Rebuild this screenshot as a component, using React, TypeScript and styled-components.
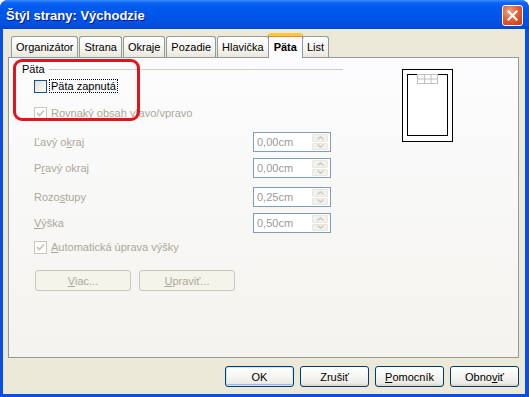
import React from 'react';
import styled, {createGlobalStyle, css} from 'styled-components';

const GlobalStyle = createGlobalStyle`
  html, body {
    margin: 0;
    padding: 0;
    background: #ffffff;
  }
  body {
    font-family: 'Liberation Sans', Arial, sans-serif;
    font-size: 11px;
  }
`;

const colors = {
  face: '#ECE9D8',
  tabBorder: '#919B9C',
  disabled: '#ACA899',
  disabledBorder: '#C9C7BA',
  fieldBorder: '#7F9DB9',
  buttonBorder: '#003C74',
  frame: '#0A4FE2',
};

const Window = styled.div`
  width: 529px;
  height: 397px;
  display: flex;
  flex-direction: column;
  background: ${colors.frame};
  border-radius: 8px 8px 0 0;
  overflow: hidden;
`;

const TitleBar = styled.div`
  height: 29px;
  flex: none;
  display: flex;
  align-items: center;
  justify-content: space-between;
  padding: 0 6px 0 6px;
  background: linear-gradient(
    to bottom,
    #3a8cff 0%,
    #0c63f2 10%,
    #0058ee 30%,
    #0055e8 60%,
    #0050e0 85%,
    #0045d0 100%
  );
`;

const Title = styled.span`
  font-family: 'Liberation Sans', Arial, sans-serif;
  font-weight: bold;
  font-size: 13px;
  color: #ffffff;
  text-shadow: 1px 1px 0 #0a1883;
  padding-top: 1px;
`;

const CloseButton = styled.div`
  width: 19px;
  height: 19px;
  margin-top: 1px;
  border: 1px solid #ffffff;
  border-radius: 3px;
  background: radial-gradient(circle at 35% 30%, #f0a688 0%, #e2603b 45%, #c7390f 100%);
  display: flex;
  align-items: center;
  justify-content: center;
`;

const Client = styled.div`
  flex: 1;
  margin: 0 4px 3px 3px;
  background: ${colors.face};
  padding: 4px 6px 0 5px;
  display: flex;
  flex-direction: column;
`;

const TabStrip = styled.div`
  display: flex;
  align-items: flex-end;
  height: 24px;
  padding-left: 3px;
  gap: 1px;
  position: relative;
  z-index: 1;
`;

const Tab = styled.div<{$active?: boolean}>`
  height: 20px;
  padding: 0 4px;
  display: flex;
  align-items: center;
  border: 1px solid ${colors.tabBorder};
  border-bottom: none;
  border-radius: 3px 3px 0 0;
  background: linear-gradient(to bottom, #ffffff, #f3f2ec 70%, #e8e6dc);
  color: #000000;
  white-space: nowrap;
  ${p =>
    p.$active &&
    css`
      height: 22px;
      margin: 0 -2px -1px -2px;
      padding: 0 5px;
      font-weight: bold;
      border-top: 3px solid #ffc83c;
      border-radius: 3px 3px 0 0;
      background: #fcfcfe;
      box-shadow: inset 0 1px 0 #e68b2c;
    `}
`;

const Panel = styled.div`
  height: 299px;
  border: 1px solid ${colors.tabBorder};
  background: linear-gradient(to bottom, #fcfcfe, #f4f3ee);
  display: flex;
  align-items: flex-start;
  position: relative;
`;

const LeftColumn = styled.div`
  width: 323px;
  padding: 4px 0 0 13px;
  display: flex;
  flex-direction: column;
`;

const GroupHeader = styled.div`
  width: 321px;
  height: 14px;
  display: flex;
  align-items: center;
  gap: 4px;
  color: #000000;
`;

const GroupLine = styled.div`
  flex: 1;
  height: 1px;
  background: #d0d0bf;
`;

const Row = styled.div<{$top: number; $height?: number}>`
  display: flex;
  align-items: center;
  margin-top: ${p => p.$top}px;
  margin-left: 12px;
  height: ${p => p.$height ?? 14}px;
`;

const FieldRow = styled(Row)`
  width: 297px;
  justify-content: space-between;
`;

const Label = styled.span<{$disabled?: boolean; $focused?: boolean}>`
  color: ${p => (p.$disabled ? colors.disabled : '#000000')};
  white-space: nowrap;
  ${p =>
    p.$focused &&
    css`
      outline: 1px dotted #000000;
      outline-offset: 0;
      padding: 0 1px;
      margin-left: -1px;
    `}
`;

const Key = styled.span`
  text-decoration: underline;
`;

const Box = styled.div<{$disabled?: boolean}>`
  width: 11px;
  height: 11px;
  flex: none;
  margin-right: 4px;
  display: flex;
  align-items: center;
  justify-content: center;
  border: 1px solid ${p => (p.$disabled ? colors.disabledBorder : '#1c5180')};
  background: ${p =>
    p.$disabled ? '#ffffff' : 'linear-gradient(135deg, #dcdcd7 0%, #f5f5f2 70%, #ffffff 100%)'};
`;

const SpinField = styled.div`
  width: 73px;
  height: 18px;
  border: 1px solid ${colors.fieldBorder};
  background: #ffffff;
  display: flex;
  align-items: center;
  justify-content: space-between;
  padding-left: 3px;
`;

const FieldValue = styled.span`
  color: #9a9a9a;
`;

const Spinner = styled.div`
  width: 16px;
  height: 16px;
  margin-right: 2px;
  display: flex;
  flex-direction: column;
  gap: 1px;
`;

const SpinHalf = styled.div`
  flex: 1;
  border-radius: 1px;
  background: #f2f1ea;
  border: 1px solid #e9e7df;
  display: flex;
  align-items: center;
  justify-content: center;
`;

const ActionRow = styled(Row)`
  gap: 8px;
  margin-left: 13px;
`;

const DisabledButton = styled.div`
  width: 94px;
  height: 19px;
  border: 1px solid ${colors.disabledBorder};
  border-radius: 3px;
  background: #f5f4ea;
  color: ${colors.disabled};
  display: flex;
  align-items: center;
  justify-content: center;
`;

const Preview = styled.svg`
  margin: 11px 0 0 57px;
  flex: none;
`;

const Annotation = styled.div`
  position: absolute;
  left: 4px;
  top: 1px;
  width: 121px;
  height: 56px;
  border: 3px solid #e0141c;
  border-radius: 9px;
  pointer-events: none;
`;

const ButtonRow = styled.div`
  display: flex;
  justify-content: flex-end;
  gap: 6px;
  margin-top: 8px;
`;

const Button = styled.div<{$default?: boolean}>`
  width: 67px;
  height: 19px;
  border: 1px solid ${colors.buttonBorder};
  border-radius: 3px;
  background: linear-gradient(to bottom, #ffffff 0%, #f7f7f4 40%, #ecebe6 85%, #d6d0c5 100%);
  color: #000000;
  display: flex;
  align-items: center;
  justify-content: center;
  ${p =>
    p.$default &&
    css`
      box-shadow: inset 0 0 0 1px #cee7ff, inset 0 -1px 0 1px #98b8ea;
    `}
`;

function CheckMark({color}: {color: string}) {
  return (
    <svg width="9" height="9" viewBox="0 0 9 9">
      <path d="M1 4 L3.5 6.5 L8 1.5" fill="none" stroke={color} strokeWidth="1.8" />
    </svg>
  );
}

function Arrow({up}: {up?: boolean}) {
  return (
    <svg width="7" height="4" viewBox="0 0 7 4">
      <path d={up ? 'M0.5 3.5 L3.5 0.8 L6.5 3.5' : 'M0.5 0.5 L3.5 3.2 L6.5 0.5'} fill="none" stroke="#c6c6c0" strokeWidth="1.2" />
    </svg>
  );
}

function Field({label, value}: {label: React.ReactNode; value: string}) {
  return (
    <>
      <Label $disabled>{label}</Label>
      <SpinField>
        <FieldValue>{value}</FieldValue>
        <Spinner>
          <SpinHalf>
            <Arrow up />
          </SpinHalf>
          <SpinHalf>
            <Arrow />
          </SpinHalf>
        </Spinner>
      </SpinField>
    </>
  );
}

const tabs = ['Organizátor', 'Strana', 'Okraje', 'Pozadie', 'Hlavička', 'Päta', 'List'];

export default function App() {
  return (
    <>
      <GlobalStyle />
      <Window>
        <TitleBar>
          <Title>Štýl strany: Východzie</Title>
          <CloseButton>
            <svg width="11" height="11" viewBox="0 0 11 11">
              <path d="M1.5 1.5 L9.5 9.5 M9.5 1.5 L1.5 9.5" stroke="#ffffff" strokeWidth="2" strokeLinecap="square" />
            </svg>
          </CloseButton>
        </TitleBar>
        <Client>
          <TabStrip>
            {tabs.map(t => (
              <Tab key={t} $active={t === 'Päta'}>
                {t}
              </Tab>
            ))}
          </TabStrip>
          <Panel>
            <LeftColumn>
              <GroupHeader>
                <span>Päta</span>
                <GroupLine />
              </GroupHeader>
              <Row $top={3}>
                <Box />
                <Label $focused>Päta zapnutá</Label>
              </Row>
              <Row $top={13}>
                <Box $disabled>
                  <CheckMark color="#c9c7ba" />
                </Box>
                <Label $disabled>
                  Rovnaký <Key>o</Key>bsah vľavo/vpravo
                </Label>
              </Row>
              <FieldRow $top={12} $height={20}>
                <Field
                  label={
                    <>
                      Ľavý o<Key>k</Key>raj
                    </>
                  }
                  value="0,00cm"
                />
              </FieldRow>
              <FieldRow $top={6} $height={20}>
                <Field
                  label={
                    <>
                      P<Key>r</Key>avý okraj
                    </>
                  }
                  value="0,00cm"
                />
              </FieldRow>
              <FieldRow $top={9} $height={20}>
                <Field
                  label={
                    <>
                      Rozo<Key>s</Key>tupy
                    </>
                  }
                  value="0,25cm"
                />
              </FieldRow>
              <FieldRow $top={6} $height={20}>
                <Field
                  label={
                    <>
                      <Key>V</Key>ýška
                    </>
                  }
                  value="0,50cm"
                />
              </FieldRow>
              <Row $top={7}>
                <Box $disabled>
                  <CheckMark color="#c9c7ba" />
                </Box>
                <Label $disabled>
                  <Key>A</Key>utomatická úprava výšky
                </Label>
              </Row>
              <ActionRow $top={16} $height={21}>
                <DisabledButton>
                  <span>
                    <Key>V</Key>iac...
                  </span>
                </DisabledButton>
                <DisabledButton>
                  <span>
                    <Key>U</Key>praviť...
                  </span>
                </DisabledButton>
              </ActionRow>
            </LeftColumn>
            <Preview width="51" height="73" viewBox="0 0 51 73">
              <rect x="0.5" y="0.5" width="50" height="72" fill="#ffffff" stroke="#000000" />
              <rect x="5.5" y="5.5" width="40" height="61" fill="#ffffff" stroke="#000000" />
              <g stroke="#c0c0c0" fill="none">
                <rect x="15.5" y="5.5" width="20" height="9" />
                <path d="M15.5 10 H35.5 M22.5 5.5 V14.5 M29 5.5 V14.5" />
              </g>
            </Preview>
            <Annotation />
          </Panel>
          <ButtonRow>
            <Button $default>OK</Button>
            <Button>Zrušiť</Button>
            <Button>
              <span>
                <Key>P</Key>omocník
              </span>
            </Button>
            <Button>
              <span>
                Obno<Key>v</Key>iť
              </span>
            </Button>
          </ButtonRow>
        </Client>
      </Window>
    </>
  );
}
